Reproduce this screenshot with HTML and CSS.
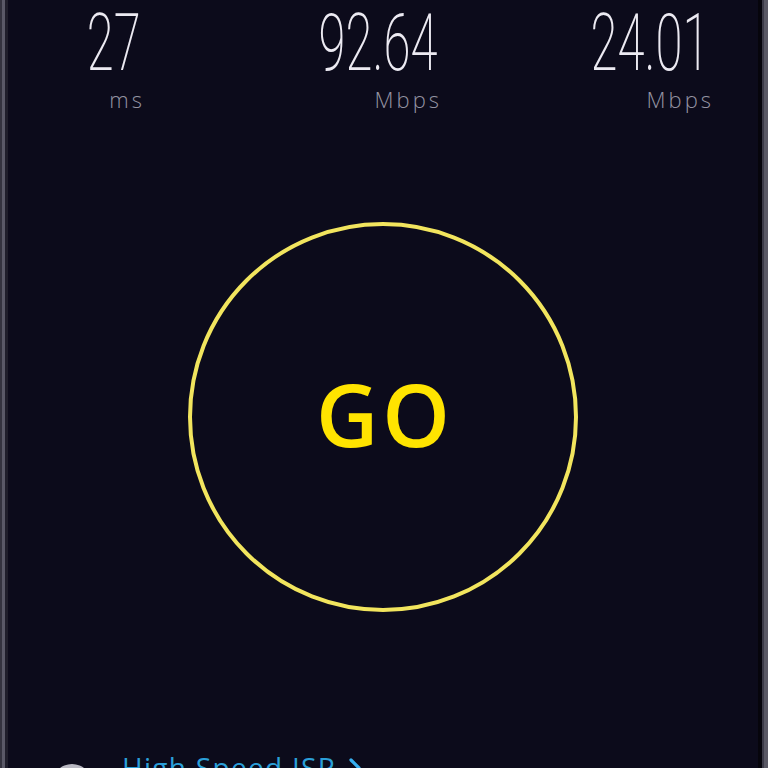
FILE: index.html
```html
<!DOCTYPE html>
<html lang="en">
  <head>
    <meta charset="UTF-8" />
    <meta name="viewport" content="width=device-width, initial-scale=1.0" />
    <title>Speed Test</title>
    <link rel="stylesheet" href="styles.css">
  </head>
  <body>
    <div class="rail rail-left"></div>

    <main class="screen">
      <section class="stats">
        <div class="stat">
          <span class="stat-value">27</span>
          <span class="stat-unit">ms</span>
        </div>
        <div class="stat">
          <span class="stat-value">92.64</span>
          <span class="stat-unit">Mbps</span>
        </div>
        <div class="stat">
          <span class="stat-value">24.01</span>
          <span class="stat-unit">Mbps</span>
        </div>
      </section>

      <button class="go-button" type="button">GO</button>

      <section class="provider">
        <span class="provider-icon"></span>
        <a class="provider-link" href="#">
          High Speed ISP
          <svg class="chevron" width="14" height="22" viewBox="0 0 14 22">
            <path d="M3 3 L11 11 L3 19" fill="none" stroke="#38b0f0" stroke-width="3.2" stroke-linecap="round" stroke-linejoin="round" />
          </svg>
        </a>
      </section>
    </main>

    <div class="rail rail-right"></div>
  </body>
</html>
```

FILE: styles.css
```css
html,
body {
  height: 100%;
}

body {
  margin: 0;
  display: flex;
  overflow: hidden;
  background-color: #0c0b1b;
  font-family: "Open Sans", Arial, sans-serif;
}

.rail {
  flex: none;
  height: 100%;
}

.rail-left {
  width: 8px;
  background: linear-gradient(
    to right,
    #34333f 0,
    #34333f 2px,
    #5a5967 2px,
    #5a5967 5px,
    #1f1e2b 5px
  );
}

.rail-right {
  width: 10px;
  background: linear-gradient(
    to right,
    #06050c 0,
    #06050c 4px,
    #3c3b48 4px,
    #3c3b48 6px,
    #5a5965 6px
  );
}

.screen {
  flex: 1;
  display: flex;
  flex-direction: column;
  overflow: hidden;
}

.stats {
  display: grid;
  grid-template-columns: 134px 297px 272px;
  padding-top: 4px;
}

.stat {
  display: flex;
  flex-direction: column;
  align-items: flex-end;
}

.stat-value {
  display: inline-block;
  padding-right: 2px;
  font-family: Roboto, "Liberation Sans", sans-serif;
  font-weight: 200;
  font-size: 79px;
  line-height: 1;
  color: #eceaf2;
  transform: scaleX(0.62);
  transform-origin: right center;
}

.stat-unit {
  margin-top: 4px;
  margin-right: -3px;
  font-weight: 300;
  font-size: 22px;
  line-height: 1.15;
  letter-spacing: 3px;
  color: #9493a2;
}

.go-button {
  align-self: center;
  flex: none;
  width: 390px;
  height: 390px;
  margin-top: 110px;
  padding: 0 0 8px 4px;
  border: 4px solid #f2e55e;
  border-radius: 50%;
  background: transparent;
  color: #ffe400;
  font-family: "Open Sans", Arial, sans-serif;
  font-weight: 600;
  font-size: 86px;
  letter-spacing: 4px;
  cursor: pointer;
}

.provider {
  display: flex;
  align-items: flex-start;
  gap: 30px;
  margin-top: 139px;
  padding-left: 44px;
}

.provider-icon {
  flex: none;
  width: 40px;
  height: 40px;
  margin-top: 13px;
  border-radius: 50%;
  background-color: #b9b8c2;
}

.provider-link {
  display: flex;
  align-items: center;
  gap: 12px;
  font-size: 28px;
  line-height: 1.2;
  letter-spacing: 1.3px;
  color: #2b9fd8;
  text-decoration: none;
}

.chevron {
  flex: none;
}
```
